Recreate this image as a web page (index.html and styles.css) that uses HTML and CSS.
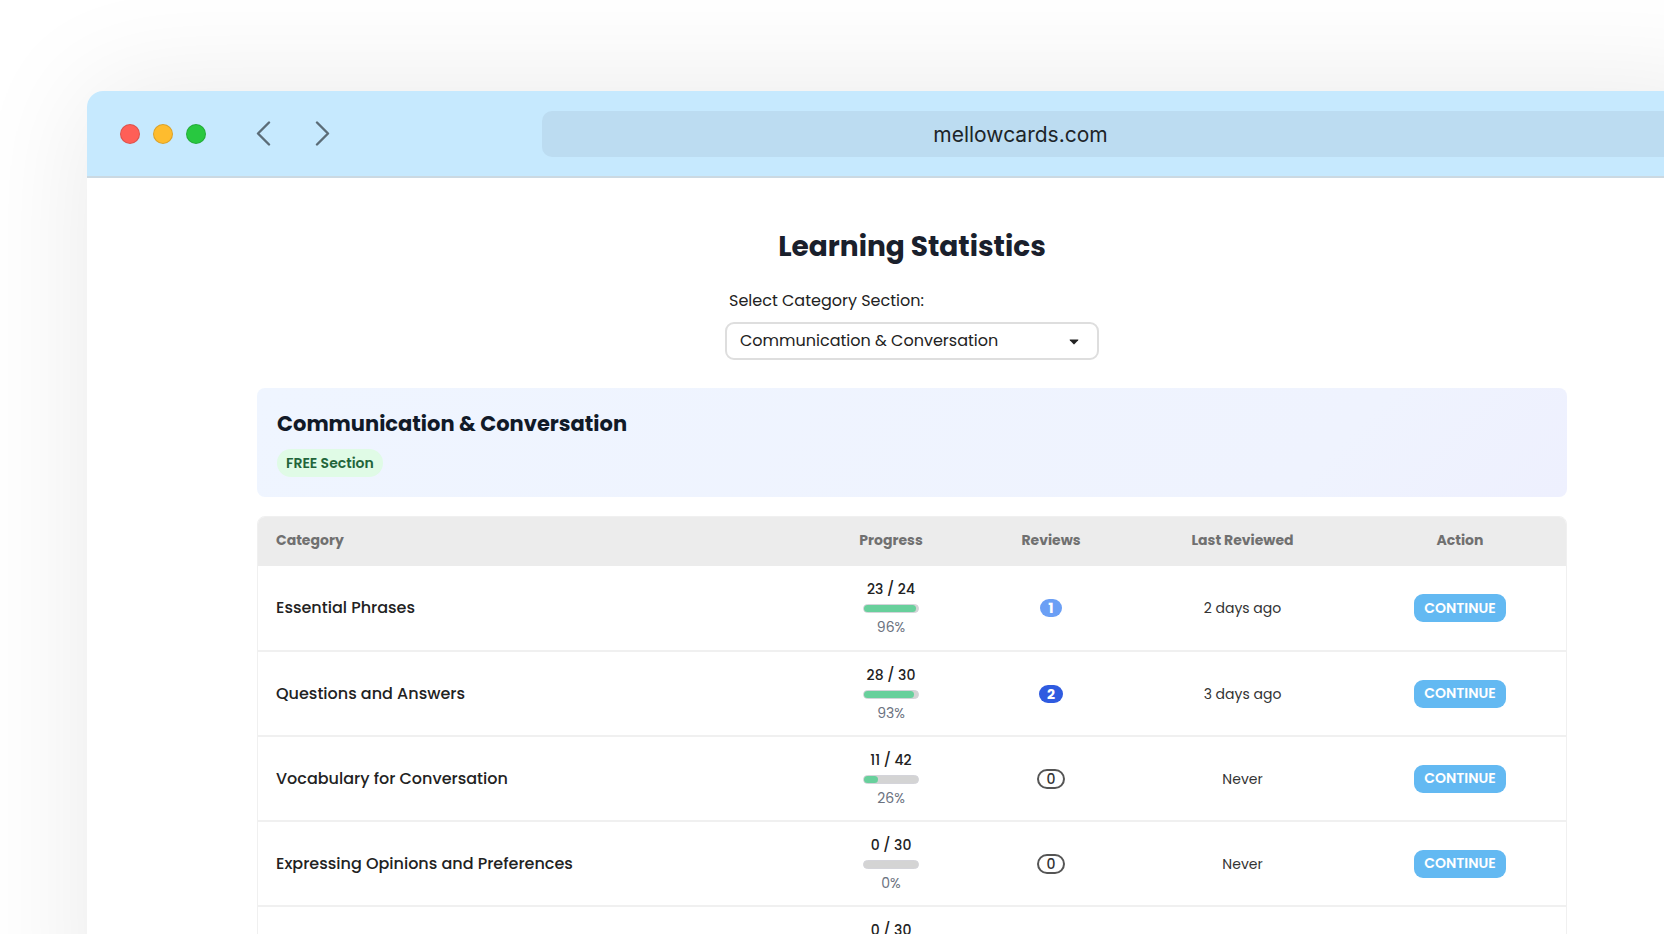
FILE: index.html
```html
<!DOCTYPE html>
<html lang="en">
<head>
  <meta charset="UTF-8" />
  <meta name="viewport" content="width=device-width, initial-scale=1.0"/>
  <title>Learning Statistics - mellowcards.com</title>
  <link rel="stylesheet" href="styles.css">
</head>
<body>

<div class="window">
  <header class="toolbar">
    <div class="dots">
      <span class="dot red"></span>
      <span class="dot yellow"></span>
      <span class="dot green"></span>
    </div>
    <nav class="arrows">
      <button class="arrow" aria-label="Back">
        <svg width="15" height="25" viewBox="0 0 15 25"><path d="M13 1.5L2 12.5l11 11"/></svg>
      </button>
      <button class="arrow" aria-label="Forward">
        <svg width="15" height="25" viewBox="0 0 15 25"><path d="M2 1.5l11 11-11 11"/></svg>
      </button>
    </nav>
    <input type="text" class="address" aria-label="Address" value="mellowcards.com" />
  </header>

  <main class="content">
    <h1>Learning Statistics</h1>

    <div class="picker">
      <label for="section">Select Category Section:</label>
      <div class="select-wrap">
        <select id="section">
          <option>Communication &amp; Conversation</option>
        </select>
        <svg class="caret" width="10" height="6" viewBox="0 0 10 6"><path d="M1 .5h8q.8 0 .2.7L5.6 5.1q-.6.6-1.2 0L.8 1.2Q.2.5 1 .5z"/></svg>
      </div>
    </div>

    <section class="banner">
      <h2>Communication &amp; Conversation</h2>
      <span class="tag">FREE Section</span>
    </section>

    <div class="table-box">
      <table>
        <colgroup>
          <col>
          <col class="col-progress">
          <col class="col-reviews">
          <col class="col-last">
          <col class="col-action">
        </colgroup>
        <thead>
          <tr>
            <th>Category</th>
            <th>Progress</th>
            <th>Reviews</th>
            <th>Last Reviewed</th>
            <th>Action</th>
          </tr>
        </thead>
        <tbody>
          <tr>
            <td>Essential Phrases</td>
            <td>
              <div class="count">23 / 24</div>
              <div class="bar"><div class="fill" style="width: 96%"></div></div>
              <div class="percent">96%</div>
            </td>
            <td><span class="reviews one">1</span></td>
            <td>2 days ago</td>
            <td><button class="btn">CONTINUE</button></td>
          </tr>
          <tr>
            <td>Questions and Answers</td>
            <td>
              <div class="count">28 / 30</div>
              <div class="bar"><div class="fill" style="width: 93%"></div></div>
              <div class="percent">93%</div>
            </td>
            <td><span class="reviews many">2</span></td>
            <td>3 days ago</td>
            <td><button class="btn">CONTINUE</button></td>
          </tr>
          <tr>
            <td>Vocabulary for Conversation</td>
            <td>
              <div class="count">11 / 42</div>
              <div class="bar"><div class="fill" style="width: 26%"></div></div>
              <div class="percent">26%</div>
            </td>
            <td><span class="reviews">0</span></td>
            <td>Never</td>
            <td><button class="btn">CONTINUE</button></td>
          </tr>
          <tr>
            <td>Expressing Opinions and Preferences</td>
            <td>
              <div class="count">0 / 30</div>
              <div class="bar"></div>
              <div class="percent">0%</div>
            </td>
            <td><span class="reviews">0</span></td>
            <td>Never</td>
            <td><button class="btn">CONTINUE</button></td>
          </tr>
          <tr>
            <td></td>
            <td>
              <div class="count">0 / 30</div>
              <div class="bar"></div>
              <div class="percent">0%</div>
            </td>
            <td></td>
            <td></td>
            <td></td>
          </tr>
        </tbody>
      </table>
    </div>
  </main>
</div>

</body>
</html>
```
FILE: styles.css
```css
:root {
  --toolbar: #c6e9fe;
  --address: #bcdcf1;
  --dark: #1a202c;
  --text: #222222;
  --gray: #6b7280;
  --line: #f0f0f0;
  --green: #68d09c;
  --blue: #63b9f2;
}
* {
  margin: 0;
  padding: 0;
  box-sizing: border-box;
  font-family: Poppins, Inter, sans-serif;
}
body {
  height: 100vh;
  overflow: hidden;
  background: #fff;
  color: var(--text);
  display: flex;
}

/* Browser window, runs off the right and bottom edges */
.window {
  flex: 1;
  margin: 91px -73px -120px 87px;
  background: #fff;
  border-radius: 16px 0 0 0;
  box-shadow: 0 0 120px rgba(0, 0, 0, 0.09);
}
.toolbar {
  display: flex;
  align-items: center;
  height: 87px;
  padding-left: 33px;
  background: var(--toolbar);
  border-bottom: 2px solid #cbd9e2;
  border-radius: 16px 0 0 0;
}
.dots {
  display: flex;
  gap: 13px;
}
.dot {
  width: 20px;
  height: 20px;
  border-radius: 50%;
  border: 1px solid rgba(0, 0, 0, 0.14);
}
.red { background: #ff5f57; }
.yellow { background: #febc2e; }
.green { background: #28c840; }
.arrows {
  display: flex;
  gap: 44px;
  margin-left: 50px;
}
.arrow {
  display: flex;
  border: none;
  background: none;
  cursor: pointer;
}
.arrow path {
  fill: none;
  stroke: #5b6c77;
  stroke-width: 2.4;
  stroke-linecap: round;
  stroke-linejoin: round;
}
.address {
  flex: 1;
  height: 46px;
  margin-left: 212px;
  padding-top: 2px;
  padding-right: 238px;
  border: none;
  border-radius: 10px;
  background: var(--address);
  color: #1d2529;
  font-family: Inter, sans-serif;
  font-size: 21px;
  text-align: center;
}

.content {
  padding: 49px 170px 0;
}
h1 {
  font-size: 28px;
  line-height: 40px;
  font-weight: 700;
  text-align: center;
  color: var(--dark);
}
.picker {
  width: 374px;
  margin: 21px auto 28px;
}
.picker label {
  display: block;
  padding-left: 4px;
  margin-bottom: 9px;
  font-size: 16px;
  line-height: 25px;
}
.select-wrap {
  position: relative;
}
select {
  appearance: none;
  width: 100%;
  height: 38px;
  padding: 0 40px 2px 13px;
  border: 2px solid #dedede;
  border-radius: 9px;
  background: #fff;
  color: var(--text);
  font-size: 16px;
}
.caret {
  position: absolute;
  right: 20px;
  top: 17px;
  fill: #222;
}

.banner {
  padding: 20px;
  margin-bottom: 19px;
  border-radius: 8px;
  background: linear-gradient(135deg, #eff5ff, #eff3fe 80%, #eef0fe);
}
h2 {
  font-size: 21px;
  line-height: 32px;
  font-weight: 700;
  color: #111a28;
  margin-bottom: 9px;
}
.tag {
  display: block;
  width: fit-content;
  padding: 0 9px;
  border-radius: 14px;
  background: #e0fbe6;
  color: #22653a;
  font-size: 14px;
  line-height: 28px;
  font-weight: 600;
}

.table-box {
  border: 1px solid var(--line);
  border-radius: 8px;
  overflow: hidden;
}
table {
  width: 100%;
  table-layout: fixed;
  border-collapse: collapse;
}
.col-progress { width: 160px; }
.col-reviews { width: 160px; }
.col-last { width: 223px; }
.col-action { width: 212px; }
th {
  height: 49px;
  padding-bottom: 2px;
  background: #ececec;
  color: #707070;
  font-size: 14px;
  font-weight: 700;
}
td {
  height: 85px;
  border-bottom: 2px solid var(--line);
  font-size: 14px;
  line-height: 20px;
  text-align: center;
  color: #333;
}
th:first-child,
td:first-child {
  padding-left: 18px;
  text-align: left;
}
td:first-child {
  font-size: 16px;
  font-weight: 500;
  color: var(--text);
}
.count {
  font-weight: 500;
  color: var(--text);
}
.bar {
  width: 56px;
  height: 9px;
  margin: 5px auto 4px;
  border: 1px solid #d4d4da;
  border-radius: 5px;
  background: #d4d4d4;
}
.fill {
  height: 100%;
  border-radius: 4px;
  background: var(--green);
}
.percent {
  font-size: 14px;
  color: var(--gray);
}
.reviews {
  display: inline-block;
  padding: 0 8px;
  border: 2px solid #555;
  border-radius: 10px;
  font-size: 14px;
  line-height: 16px;
  font-weight: 500;
}
.one,
.many {
  border: none;
  line-height: 18px;
  font-weight: 700;
  color: #fff;
}
.one { background: #6b9ff5; }
.many { background: #2f5be0; }
.btn {
  height: 28px;
  padding: 0 10px;
  border: none;
  border-radius: 9px;
  background: var(--blue);
  color: #fff;
  font-size: 14px;
  font-weight: 600;
  cursor: pointer;
}
```
